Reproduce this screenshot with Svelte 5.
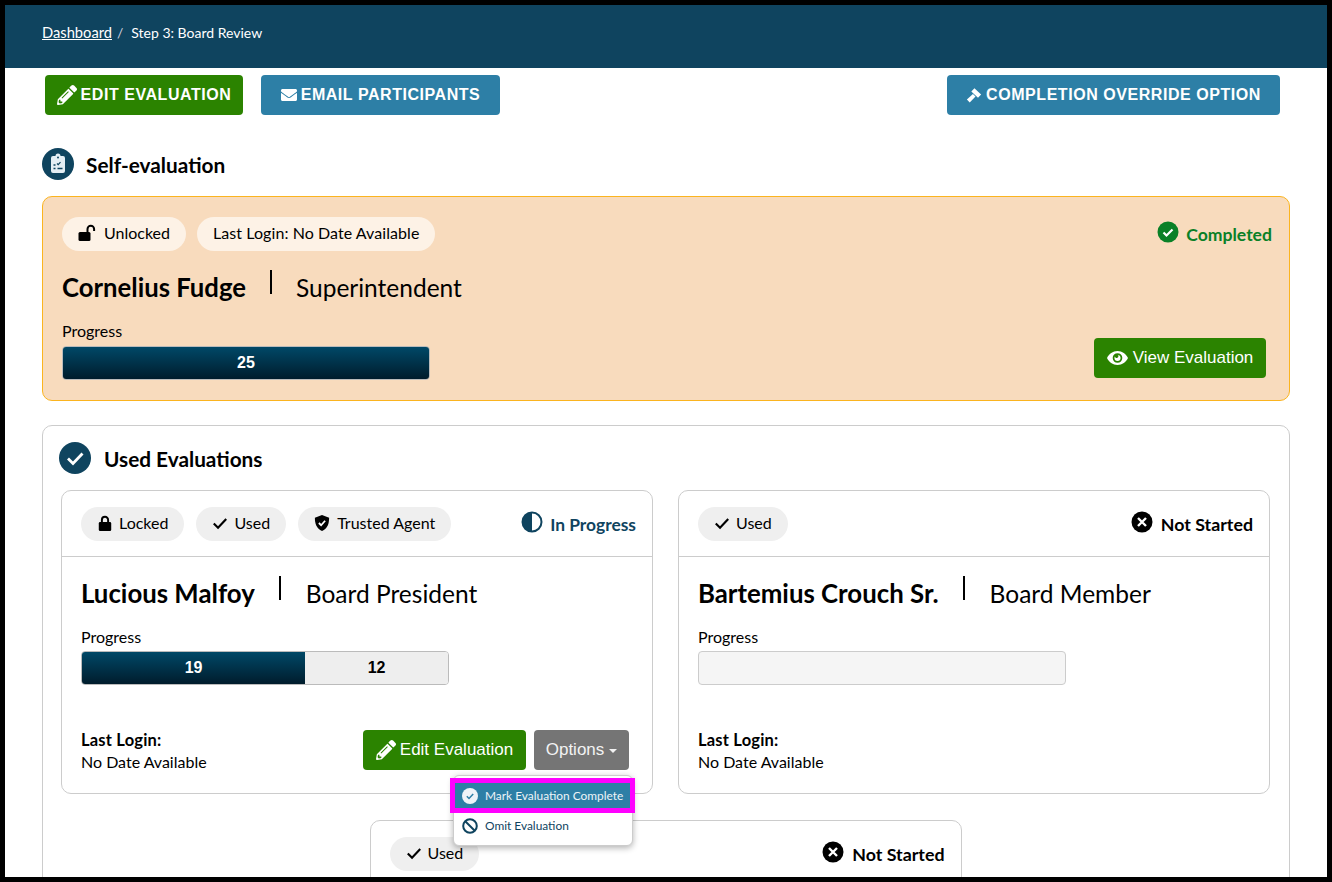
<script lang="ts">
  const pencil = 'M497.9 142.1l-46.1 46.1c-4.7 4.7-12.3 4.7-17 0l-111-111c-4.7-4.7-4.7-12.3 0-17l46.1-46.1c18.7-18.7 49.1-18.7 67.9 0l60.1 60.1c18.8 18.7 18.8 49.1 0 67.9zM284.2 99.8L21.6 362.4.4 483.9c-2.9 16.4 11.4 30.6 27.8 27.8l121.5-21.3 262.6-262.6c4.2-4.2 4.2-11 0-15.2l-111-111c-4.3-4.2-11.1-4.2-15.3 0zM124.1 339.9c-4.9-4.9-4.9-12.8 0-17.7l154-154c4.9-4.9 12.8-4.9 17.7 0s4.9 12.8 0 17.7l-154 154c-4.9 4.9-12.8 4.9-17.7 0zM88 424h48v36.3l-64.5 11.3-31.1-31.1L51.7 376H88v48z';
  const envelope = 'M502.3 190.8c3.9-3.1 9.7-.2 9.7 4.7V400c0 26.5-21.5 48-48 48H48c-26.5 0-48-21.5-48-48V195.6c0-5 5.7-7.8 9.7-4.7 22.4 17.4 52.1 39.5 154.1 113.6 21.1 15.4 56.7 47.8 92.2 47.6 35.7.3 72-32.8 92.3-47.6 102-74.1 131.6-96.3 154-113.7zM256 320c23.2.4 56.6-29.2 73.4-41.4 132.7-96.3 142.8-104.7 173.4-128.7 5.8-4.5 9.2-11.5 9.2-18.9v-19c0-26.5-21.5-48-48-48H48C21.5 64 0 85.5 0 112v19c0 7.4 3.4 14.3 9.2 18.9 30.6 23.9 40.7 32.4 173.4 128.7 16.8 12.2 50.2 41.8 73.4 41.4z';
</script>

{#snippet lockIcon(open: boolean)}
  {#if open}
    <svg class="pill-icon wide" viewBox="0 0 19 18" aria-hidden="true">
      <rect x="0.500" y="8" width="12" height="9" rx="1.500" fill="#000" />
      <path d="M9.500 8V5a3.300 3.300 0 0 1 6.600 0v2" fill="none" stroke="#000" stroke-width="2" />
    </svg>
  {:else}
    <svg class="pill-icon" viewBox="0 0 18 18" aria-hidden="true">
      <rect x="2" y="8" width="14" height="10" rx="1.500" fill="#000" />
      <path d="M5.500 8V5.500a3.500 3.500 0 0 1 7 0V8" fill="none" stroke="#000" stroke-width="2.200" />
    </svg>
  {/if}
{/snippet}

{#snippet tick()}
  <svg class="pill-icon" viewBox="0 0 18 18" aria-hidden="true">
    <path d="M2 9.500l4.800 4.800L16 4.500" fill="none" stroke="#000" stroke-width="2.400" />
  </svg>
{/snippet}

{#snippet notStarted()}
  <div class="status status-none">
    <svg class="status-icon" viewBox="0 0 22 22" aria-hidden="true">
      <circle cx="11" cy="11" r="10.500" fill="#000" />
      <path d="M7 7l8 8M15 7l-8 8" stroke="#fff" stroke-width="2.400" />
    </svg>
    <span>Not Started</span>
  </div>
{/snippet}

{#snippet person(name: string, role: string)}
  <div class="person">
    <span class="name">{name}</span>
    <span class="divider"></span>
    <span class="role">{role}</span>
  </div>
{/snippet}

<div class="frame">
  <header class="topbar">
    <nav class="crumbs">
      <a href="#top">Dashboard</a>
      <span class="slash">/</span>
      <span>Step 3: Board Review</span>
    </nav>
  </header>

  <div class="actions">
    <div class="action-group">
      <button class="btn btn-green btn-caps edit-main">
        <svg class="btn-icon" viewBox="0 0 512 512" aria-hidden="true"><path d={pencil} /></svg>
        EDIT EVALUATION
      </button>
      <button class="btn btn-blue btn-caps email-main">
        <svg class="btn-icon small" viewBox="0 0 512 512" aria-hidden="true"><path d={envelope} /></svg>
        EMAIL PARTICIPANTS
      </button>
    </div>
    <button class="btn btn-blue btn-caps override">
      <svg class="btn-icon small" viewBox="0 0 18 18" aria-hidden="true">
        <path d="M9.500 1.500L17 8.500l-3.500 3.700L6 5.200zM1 14l6.800-6 2.900 2.800L4.200 17.500z" />
      </svg>
      COMPLETION OVERRIDE OPTION
    </button>
  </div>

  <main class="content">
    <h2 class="section-title self-title">
      <span class="round-icon">
        <svg viewBox="0 0 32 32" width="32" height="32" aria-hidden="true">
          <path d="M11 8h2.500a2.500 2.500 0 0 1 5 0H21a2 2 0 0 1 2 2v13a2 2 0 0 1-2 2H11a2 2 0 0 1-2-2V10a2 2 0 0 1 2-2z" fill="#e4eef4" />
          <path d="M15 15.500l1.200 1.200 2.300-2.500" fill="none" stroke="#0f445f" stroke-width="1.200" />
          <path d="M11.500 17h2M11.500 20.500h2M15.500 20.500h5" stroke="#0f445f" stroke-width="1.400" />
          <circle cx="16" cy="9.500" r="1" fill="#0f445f" />
        </svg>
      </span>
      Self-evaluation
    </h2>

    <section class="self-card">
      <div class="card-top">
        <div class="pills">
          <span class="pill pill-light">{@render lockIcon(true)}Unlocked</span>
          <span class="pill pill-light login-pill">Last Login: No Date Available</span>
        </div>
        <div class="status status-done">
          <svg class="status-icon" viewBox="0 0 22 22" aria-hidden="true">
            <circle cx="11" cy="11" r="10.500" fill="#0a8027" />
            <path d="M6.500 11.500l3 3 6-6" fill="none" stroke="#fff" stroke-width="2.200" />
          </svg>
          <span>Completed</span>
        </div>
      </div>
      {@render person('Cornelius Fudge', 'Superintendent')}
      <div class="card-bottom">
        <div class="progress">
          <div class="progress-label">Progress</div>
          <div class="bar"><div class="seg seg-done" style="width: 100%">25</div></div>
        </div>
        <button class="btn btn-green btn-plain view-btn">
          <svg class="btn-icon eye" viewBox="0 0 24 16" aria-hidden="true">
            <path fill-rule="evenodd" d="M12 0c5.400 0 9.800 3.400 12 8-2.200 4.600-6.600 8-12 8S2.200 12.600 0 8C2.200 3.400 6.600 0 12 0zm0 2.500a5.500 5.500 0 1 0 0 11 5.500 5.500 0 0 0 0-11zm0 2a3.500 3.500 0 1 1-3.500 3.500c0-.7.2-1.300.5-1.800.2 1 1 1.800 2 1.800 1.100 0 2-.9 2-2 0-.6-.3-1.100-.7-1.400z" />
          </svg>
          View Evaluation
        </button>
      </div>
    </section>

    <section class="used-panel">
      <h2 class="section-title used-title">
        <span class="round-icon">
          <svg viewBox="0 0 32 32" width="32" height="32" aria-hidden="true">
            <path d="M9 16.500l5 5 9.500-10" fill="none" stroke="#fff" stroke-width="2.800" />
          </svg>
        </span>
        Used Evaluations
      </h2>

      <div class="eval-grid">
        <article class="eval-card">
          <div class="eval-head">
            <div class="pills">
              <span class="pill tight">{@render lockIcon(false)}Locked</span>
              <span class="pill tight">{@render tick()}Used</span>
              <span class="pill">
                <svg class="pill-icon" viewBox="0 0 18 18" aria-hidden="true">
                  <path d="M9 0l8 3c0 7-1.800 12-8 15C2.800 15 1 10 1 3z" fill="#000" />
                  <path d="M5.500 9l2.500 2.500 4.500-5" fill="none" stroke="#fff" stroke-width="2" />
                </svg>
                Trusted Agent
              </span>
            </div>
            <div class="status status-progress">
              <svg class="status-icon" viewBox="0 0 22 22" aria-hidden="true">
                <circle cx="11" cy="11" r="9.500" fill="#fff" stroke="#0f445f" stroke-width="2" />
                <path d="M11 1.500a9.500 9.500 0 0 1 0 19z" fill="#0f445f" transform="rotate(180 11 11)" />
              </svg>
              <span>In Progress</span>
            </div>
          </div>
          <div class="eval-body">
            {@render person('Lucious Malfoy', 'Board President')}
            <div class="progress">
              <div class="progress-label">Progress</div>
              <div class="bar">
                <div class="seg seg-done" style="width: 61%">19</div>
                <div class="seg seg-rest" style="width: 39%">12</div>
              </div>
            </div>
            <div class="eval-foot">
              <div class="login"><strong>Last Login:</strong><span>No Date Available</span></div>
              <div class="foot-btns">
                <button class="btn btn-green btn-plain edit-btn">
                  <svg class="btn-icon" viewBox="0 0 512 512" aria-hidden="true"><path d={pencil} /></svg>
                  Edit Evaluation
                </button>
                <button class="btn btn-gray btn-plain options-btn">Options<span class="caret"></span></button>
              </div>
            </div>
          </div>

          <ul class="menu">
            <li class="menu-item active">
              <svg class="menu-icon" viewBox="0 0 16 16" aria-hidden="true">
                <circle cx="8" cy="8" r="8" fill="#eef4f8" />
                <path d="M4.800 8.300l2.200 2.200 4.200-4.500" fill="none" stroke="#2d7fa6" stroke-width="1.500" />
              </svg>
              Mark Evaluation Complete
            </li>
            <li class="menu-item">
              <svg class="menu-icon" viewBox="0 0 16 16" aria-hidden="true">
                <circle cx="8" cy="8" r="6.800" fill="none" stroke="#0f445f" stroke-width="2" />
                <path d="M3.500 3.500l9 9" stroke="#0f445f" stroke-width="2" />
              </svg>
              Omit Evaluation
            </li>
          </ul>
        </article>

        <article class="eval-card">
          <div class="eval-head">
            <div class="pills">
              <span class="pill tight">{@render tick()}Used</span>
            </div>
            {@render notStarted()}
          </div>
          <div class="eval-body">
            {@render person('Bartemius Crouch Sr.', 'Board Member')}
            <div class="progress">
              <div class="progress-label">Progress</div>
              <div class="bar bar-empty"></div>
            </div>
            <div class="eval-foot">
              <div class="login"><strong>Last Login:</strong><span>No Date Available</span></div>
            </div>
          </div>
        </article>

        <article class="eval-card">
          <div class="eval-head">
            <div class="pills">
              <span class="pill tight">{@render tick()}Used</span>
            </div>
            {@render notStarted()}
          </div>
        </article>
      </div>
    </section>
  </main>
</div>

<style>
  :global(body) {
    margin: 0;
    background: #fff;
  }

  .frame {
    box-sizing: border-box;
    height: 882px;
    overflow: hidden;
    border: 5px solid #000;
    background: #fff;
    font-family: Lato, "Noto Sans", sans-serif;
    color: #000;
  }

  .topbar {
    height: 63px;
    background: #0f445f;
    padding-left: 37px;
    display: flex;
    align-items: center;
    box-sizing: border-box;
    padding-bottom: 9px;
  }

  .crumbs {
    display: flex;
    align-items: center;
    gap: 5px;
    color: #fff;
    font-size: 14px;
  }

  .crumbs a {
    color: #fff;
    font-size: 14.7px;
    text-decoration: underline;
  }

  .slash {
    color: #ccd;
    margin-right: 3px;
  }

  .actions {
    display: flex;
    justify-content: space-between;
    padding: 7px 47px 0 40px;
  }

  .action-group {
    display: flex;
    gap: 18px;
  }

  .btn {
    display: inline-flex;
    align-items: center;
    justify-content: center;
    height: 40px;
    border: 0;
    border-radius: 4px;
    padding: 0;
    color: #fff;
    font-family: "Liberation Sans", Arial, sans-serif;
  }

  .btn-caps {
    font-size: 16px;
    font-weight: 700;
    letter-spacing: 0.55px;
  }

  .btn-plain {
    font-size: 17px;
    font-weight: 400;
  }

  .btn-green {
    background: #2b8300;
  }

  .btn-blue {
    background: #2d7fa6;
  }

  .btn-gray {
    background: #757575;
  }

  .btn-icon {
    width: 20px;
    height: 20px;
    fill: #fff;
    margin-right: 4px;
    flex: none;
  }

  .btn-icon.small {
    width: 16px;
    height: 16px;
  }

  .btn-icon.eye {
    width: 21px;
    height: 14px;
    margin-right: 5px;
  }

  .edit-main {
    width: 198px;
  }

  .email-main {
    width: 239px;
  }

  .override {
    width: 333px;
  }

  .view-btn {
    width: 172px;
    margin-bottom: 2px;
  }

  .edit-btn {
    width: 163px;
  }

  .options-btn {
    width: 95px;
    color: #f2f2f2;
  }

  .caret {
    display: inline-block;
    margin-left: 5px;
    margin-top: 2px;
    border-top: 4px solid #f2f2f2;
    border-left: 4px solid transparent;
    border-right: 4px solid transparent;
  }

  .content {
    padding: 33px 37px 0;
  }

  .section-title {
    display: flex;
    align-items: center;
    gap: 12px;
    margin: 0;
    font-size: 20.8px;
    font-weight: 700;
  }

  .self-title {
    height: 32px;
  }

  .round-icon {
    display: flex;
    width: 32px;
    height: 32px;
    border-radius: 50%;
    background: #0f445f;
    flex: none;
  }

  .self-card {
    box-sizing: border-box;
    height: 205px;
    margin-top: 16px;
    padding: 20px 17px 20px 19px;
    background: #f8dbbd;
    border: 1px solid #fbb41f;
    border-radius: 10px;
    display: flex;
    flex-direction: column;
  }

  .card-top {
    display: flex;
    justify-content: space-between;
  }

  .card-bottom {
    display: flex;
    justify-content: space-between;
    align-items: flex-end;
    margin-top: auto;
    padding-right: 6px;
  }

  .pills {
    display: flex;
    gap: 12px;
  }

  .card-top .pills {
    gap: 11px;
  }

  .pill {
    box-sizing: border-box;
    display: inline-flex;
    align-items: center;
    gap: 7px;
    height: 34px;
    padding: 0 16px 3px;
    border-radius: 17px;
    background: #efefef;
    font-size: 16px;
    white-space: nowrap;
  }

  .pill.tight {
    gap: 6px;
  }

  .pill-light {
    background: #fdf2e6;
  }

  .login-pill {
    letter-spacing: 0.07px;
  }

  .pill-icon {
    width: 16px;
    height: 16px;
    flex: none;
  }

  .pill-icon.wide {
    width: 19px;
    height: 18px;
  }

  .status {
    display: flex;
    align-items: center;
    gap: 7px;
    font-size: 17.6px;
    font-weight: 700;
    height: 34px;
  }

  .status-icon {
    width: 22px;
    height: 22px;
    flex: none;
    margin-top: -4px;
  }

  .status-done {
    color: #0a8027;
  }

  .status-progress {
    color: #0f445f;
    font-size: 17.4px;
  }

  .status-none {
    font-size: 17.8px;
    gap: 8px;
  }

  .person {
    display: flex;
    align-items: center;
    gap: 24px;
    height: 32px;
    margin-top: 20px;
    white-space: nowrap;
  }

  .eval-body .person {
    gap: 24.5px;
  }

  .name {
    font-size: 25.7px;
    font-weight: 700;
  }

  .eval-body .name {
    font-size: 25.8px;
  }

  .role {
    font-size: 24.5px;
  }

  .divider {
    width: 2px;
    height: 24px;
    background: #000;
    margin-top: -10px;
  }

  .progress {
    width: 368px;
  }

  .progress-label {
    font-size: 16px;
    line-height: 20px;
    margin-bottom: 5px;
  }

  .bar {
    box-sizing: border-box;
    display: flex;
    height: 34px;
    border: 1px solid #bbb;
    border-radius: 4px;
    overflow: hidden;
    font-family: "Liberation Sans", Arial, sans-serif;
    font-size: 16px;
    font-weight: 700;
  }

  .bar-empty {
    background: #f5f5f5;
    border-color: #ccc;
  }

  .seg {
    display: flex;
    align-items: center;
    justify-content: center;
  }

  .seg-done {
    color: #fff;
    background: linear-gradient(#004867, #001c2c);
  }

  .seg-rest {
    color: #000;
    background: #eee;
  }

  .used-panel {
    margin-top: 24px;
    padding: 16px 19px 40px 18px;
    border: 1px solid #ccc;
    border-radius: 10px;
  }

  .used-title {
    margin-left: -2px;
    height: 32px;
    gap: 13px;
  }

  .eval-grid {
    display: flex;
    flex-wrap: wrap;
    justify-content: center;
    gap: 26px 25px;
    margin-top: 16px;
  }

  .eval-card {
    position: relative;
    box-sizing: border-box;
    width: 592px;
    height: 304px;
    border: 1px solid #ccc;
    border-radius: 10px;
  }

  .eval-head {
    box-sizing: border-box;
    display: flex;
    justify-content: space-between;
    height: 66px;
    padding: 16px 16px 0 19px;
    border-bottom: 1px solid #ccc;
  }

  .eval-body {
    padding: 0 23px 0 19px;
  }

  .eval-body .progress {
    margin-top: 18px;
  }

  .eval-body .progress-label {
    margin-bottom: 4px;
  }

  .eval-foot {
    display: flex;
    justify-content: space-between;
    align-items: flex-end;
    margin-top: 45px;
    height: 40px;
  }

  .login {
    display: flex;
    flex-direction: column;
    gap: 2px;
    font-size: 16px;
    line-height: 19px;
    margin-bottom: -1px;
  }

  .login strong {
    font-size: 16.5px;
    letter-spacing: 0.2px;
  }

  .foot-btns {
    display: flex;
    gap: 8px;
  }

  .menu {
    position: absolute;
    top: 284px;
    left: 391px;
    z-index: 5;
    box-sizing: border-box;
    width: 180px;
    height: 71px;
    margin: 0;
    padding: 7px 0 0;
    list-style: none;
    background: #fff;
    border: 1px solid #ccc;
    border-radius: 6px;
    box-shadow: 0 2px 6px rgba(0, 0, 0, 0.3);
  }

  .menu-item {
    display: flex;
    align-items: center;
    gap: 7px;
    height: 25px;
    margin-bottom: 5px;
    padding-left: 8px;
    font-size: 11.9px;
    color: #0f445f;
    white-space: nowrap;
  }

  .menu-item.active {
    background: #2d7fa6;
    color: #eef4f8;
    outline: 5px solid #ff00ff;
    margin-left: 1px;
    margin-right: 2px;
    padding-left: 7px;
  }

  .menu-icon {
    width: 16px;
    height: 16px;
    flex: none;
  }
</style>
